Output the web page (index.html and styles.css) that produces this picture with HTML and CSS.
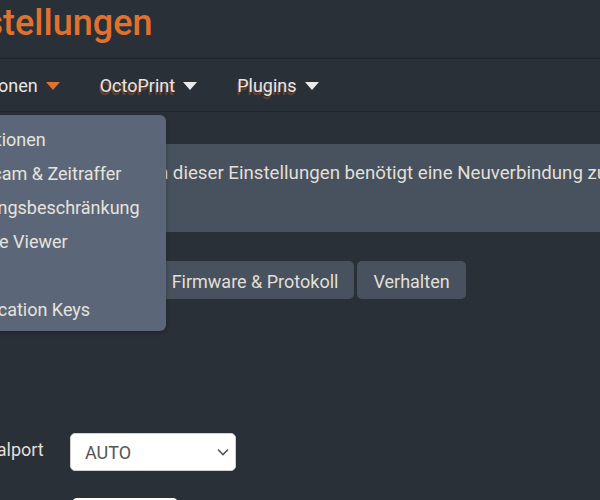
FILE: index.html
```html
<!DOCTYPE html>
<html lang="de">
<head>
<meta charset="utf-8">
<title>Einstellungen</title>
<link rel="stylesheet" href="styles.css">
</head>
<body>
<div class="page">
  <header class="header">
    <h1 class="title">Einstellungen</h1>
  </header>
  <nav class="nav">
    <div class="nav-item active">
      <span>Funktionen</span><i class="caret"></i>
      <ul class="menu">
        <li>Funktionen</li>
        <li>Webcam &amp; Zeitraffer</li>
        <li>Zugangsbeschränkung</li>
        <li>Gcode Viewer</li>
        <li>API</li>
        <li>Application Keys</li>
      </ul>
    </div>
    <div class="nav-item"><span class="glow">OctoPrint</span><i class="caret"></i></div>
    <div class="nav-item"><span class="glow">Plugins</span><i class="caret"></i></div>
  </nav>
  <main class="content">
    <div class="info">Achtung: Eine Änderung an dieser Einstellungen benötigt eine Neuverbindung zum<br>Drucker.</div>
    <div class="tabs">
      <span class="tab">Allgemein</span>
      <span class="tab">Timeouts</span>
      <span class="tab">Firmware &amp; Protokoll</span>
      <span class="tab">Verhalten</span>
    </div>
    <div class="row">
      <label class="label">Serialport</label>
      <div class="select">
        <span>AUTO</span>
        <svg width="12" height="8" viewBox="0 0 12 8"><path d="M1 1.5 6 6.5 11 1.5" fill="none" stroke="#555" stroke-width="1.6"/></svg>
      </div>
    </div>
    <div class="row">
      <label class="label">Baudrate</label>
      <div class="input"></div>
    </div>
  </main>
</div>
</body>
</html>
```
FILE: styles.css
```css
html, body {
  margin: 0;
  padding: 0;
  background: #2a3038;
  overflow: hidden;
}
body {
  width: 600px;
  height: 500px;
  font-family: Roboto, "Liberation Sans", sans-serif;
  color: #e4e1da;
}
.page {
  margin-left: -60px;
  width: 760px;
}
.header {
  height: 59px;
  border-bottom: 1px solid #1f252b;
  box-sizing: border-box;
  padding-top: 2px;
}
.title {
  margin: 0 0 0 -5px;
  font-size: 36px;
  font-weight: 500;
  line-height: 43px;
  color: #e2702e;
}
.nav {
  display: flex;
  height: 53px;
  border-bottom: 1px solid #1f252b;
  box-sizing: border-box;
}
.nav-item {
  position: relative;
  display: flex;
  align-items: center;
  gap: 8px;
  padding: 1px 20px 0;
  font-size: 18px;
  line-height: 51px;
  color: #e8e6e3;
}
.nav-item.active {
  padding-left: 9px;
}
.glow {
  text-shadow: -1px 3px 1px rgba(200, 95, 35, 0.5);
}
.caret {
  display: block;
  width: 0;
  height: 0;
  border-left: 7.5px solid transparent;
  border-right: 7.5px solid transparent;
  border-top: 8px solid #ecebe8;
  margin-top: 1px;
}
.active .caret {
  border-top-color: #e2702e;
}
.menu {
  position: absolute;
  top: 56px;
  left: -3px;
  width: 229px;
  margin: 0;
  padding: 8px 0 4px;
  list-style: none;
  background: #5b6778;
  border-radius: 6px;
  box-shadow: 0 2px 4px rgba(0, 0, 0, 0.25);
  z-index: 5;
}
.menu li {
  height: 34px;
  line-height: 34px;
  padding-left: 20px;
  white-space: nowrap;
  font-size: 18px;
  color: #e6e3dc;
}
.content {
  padding-top: 32px;
}
.info {
  background: #47525e;
  padding: 16px 20px 20px 4px;
  font-size: 18.7px;
  line-height: 26px;
  color: #e2dfd7;
  white-space: nowrap;
}
.tabs {
  display: flex;
  gap: 3px;
  margin: 29px 0 0 -10px;
}
.tab {
  background: #47525e;
  border-radius: 5px;
  padding: 3px 16px 0;
  box-sizing: border-box;
  height: 38px;
  line-height: 35px;
  font-size: 18px;
  color: #e2dfd7;
}
.row {
  display: flex;
  align-items: center;
}
.tabs + .row {
  margin-top: 134px;
}
.row + .row {
  margin-top: 27px;
}
.label {
  width: 104px;
  padding: 0 0 6px 26px;
  font-size: 18px;
  color: #e2dfd7;
}
.select {
  display: flex;
  align-items: center;
  justify-content: space-between;
  width: 166px;
  height: 38px;
  box-sizing: border-box;
  padding: 0 6px 0 14px;
  background: #fff;
  border: 1px solid #cfcfcf;
  border-radius: 5px;
  font-size: 18px;
  color: #555;
}
.input {
  width: 106px;
  height: 38px;
  margin-left: 2px;
  background: #fff;
  border-radius: 5px;
}
```
